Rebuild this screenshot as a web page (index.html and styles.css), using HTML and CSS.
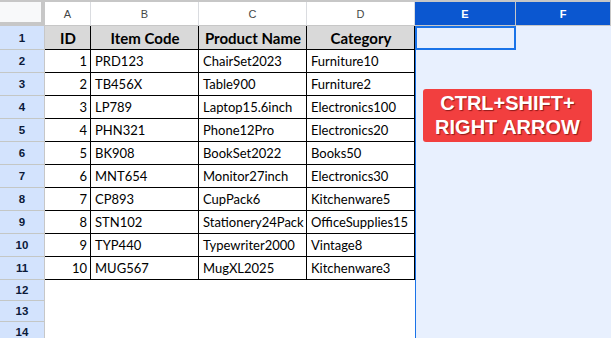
FILE: index.html
```html
<!DOCTYPE html>
<html>
<head>
    <title>Sheet</title>
    <link rel="stylesheet" href="styles.css">
</head>
<body>
    <div class="sheet">
        <div class="corner"></div>
        <div class="colhead">A</div>
        <div class="colhead">B</div>
        <div class="colhead">C</div>
        <div class="colhead">D</div>
        <div class="colhead picked">E</div>
        <div class="colhead picked">F</div>

        <div class="rowhead">1</div>
        <div class="cell th">ID</div>
        <div class="cell th">Item Code</div>
        <div class="cell th">Product Name</div>
        <div class="cell th">Category</div>
        <div class="range active"></div>
        <div class="range"></div>

        <div class="rowhead">2</div>
        <div class="cell num">1</div>
        <div class="cell">PRD123</div>
        <div class="cell">ChairSet2023</div>
        <div class="cell">Furniture10</div>
        <div class="range"></div>
        <div class="range"></div>

        <div class="rowhead">3</div>
        <div class="cell num">2</div>
        <div class="cell">TB456X</div>
        <div class="cell">Table900</div>
        <div class="cell">Furniture2</div>
        <div class="range"></div>
        <div class="range"></div>

        <div class="rowhead">4</div>
        <div class="cell num">3</div>
        <div class="cell">LP789</div>
        <div class="cell">Laptop15.6inch</div>
        <div class="cell">Electronics100</div>
        <div class="range"></div>
        <div class="range"></div>

        <div class="rowhead">5</div>
        <div class="cell num">4</div>
        <div class="cell">PHN321</div>
        <div class="cell">Phone12Pro</div>
        <div class="cell">Electronics20</div>
        <div class="range"></div>
        <div class="range"></div>

        <div class="rowhead">6</div>
        <div class="cell num">5</div>
        <div class="cell">BK908</div>
        <div class="cell">BookSet2022</div>
        <div class="cell">Books50</div>
        <div class="range"></div>
        <div class="range"></div>

        <div class="rowhead">7</div>
        <div class="cell num">6</div>
        <div class="cell">MNT654</div>
        <div class="cell">Monitor27inch</div>
        <div class="cell">Electronics30</div>
        <div class="range"></div>
        <div class="range"></div>

        <div class="rowhead">8</div>
        <div class="cell num">7</div>
        <div class="cell">CP893</div>
        <div class="cell">CupPack6</div>
        <div class="cell">Kitchenware5</div>
        <div class="range"></div>
        <div class="range"></div>

        <div class="rowhead">9</div>
        <div class="cell num">8</div>
        <div class="cell">STN102</div>
        <div class="cell">Stationery24Pack</div>
        <div class="cell">OfficeSupplies15</div>
        <div class="range"></div>
        <div class="range"></div>

        <div class="rowhead">10</div>
        <div class="cell num">9</div>
        <div class="cell">TYP440</div>
        <div class="cell">Typewriter2000</div>
        <div class="cell">Vintage8</div>
        <div class="range"></div>
        <div class="range"></div>

        <div class="rowhead">11</div>
        <div class="cell num">10</div>
        <div class="cell">MUG567</div>
        <div class="cell">MugXL2025</div>
        <div class="cell">Kitchenware3</div>
        <div class="range"></div>
        <div class="range"></div>

        <div class="rowhead">12</div>
        <div class="empty"></div>
        <div class="empty"></div>
        <div class="empty"></div>
        <div class="empty"></div>
        <div class="range"></div>
        <div class="range"></div>

        <div class="rowhead">13</div>
        <div class="empty"></div>
        <div class="empty"></div>
        <div class="empty"></div>
        <div class="empty"></div>
        <div class="range"></div>
        <div class="range"></div>

        <div class="rowhead">14</div>
        <div class="empty"></div>
        <div class="empty"></div>
        <div class="empty"></div>
        <div class="empty"></div>
        <div class="range"></div>
        <div class="range"></div>
    </div>

    <div class="shortcut">CTRL+SHIFT+<br>RIGHT ARROW</div>
</body>
</html>
```

FILE: styles.css
```css
* {
    box-sizing: border-box;
}
body {
    margin: 0;
    background: #fff;
    overflow: hidden;
    position: relative;
    width: 611px;
    height: 338px;
}
.sheet {
    display: grid;
    grid-template-columns: 45px 46px 108px 108px 108px 101px 95px;
    grid-template-rows: 24px 24px repeat(10, 23px) repeat(3, 21px);
    border-top: 2px solid #c7c7c7;
    font-family: Lato, "Liberation Sans", sans-serif;
}
.corner {
    background: #f8f9fa;
    border-right: 4px solid #c7c7c7;
    border-bottom: 4px solid #c7c7c7;
}
.colhead {
    display: flex;
    align-items: center;
    justify-content: center;
    font-family: "Liberation Sans", Arial, sans-serif;
    font-size: 11px;
    color: #444746;
    border-right: 1px solid #dadce0;
    border-bottom: 1px solid #c7c7c7;
}
.colhead.picked {
    background: #0b57d0;
    color: #fff;
    font-weight: bold;
    border-right-color: #c7c7c7;
}
.rowhead {
    display: flex;
    align-items: center;
    justify-content: center;
    background: #d3e3fd;
    font-family: "Liberation Sans", Arial, sans-serif;
    font-size: 11.5px;
    font-weight: bold;
    color: #0b1a3a;
    border-right: 1px solid #c7c7c7;
    border-bottom: 1px solid #c4c7c5;
}
.cell {
    display: flex;
    align-items: center;
    padding: 0 3px 0 4px;
    font-size: 13px;
    color: #000;
    white-space: nowrap;
    overflow: hidden;
    border-right: 1px solid #000;
    border-bottom: 1px solid #000;
}
.cell.th {
    justify-content: center;
    background: #d9d9d9;
    font-weight: bold;
    font-size: 15px;
}
.cell.num {
    justify-content: flex-end;
}
.range {
    background: #e8f0fe;
}
.range:nth-child(7n+6) {
    border-left: 1px solid #1a73e8;
}
.range.active {
    border: 2px solid #1a73e8;
}
.shortcut {
    position: absolute;
    left: 423px;
    top: 89px;
    width: 169px;
    height: 53px;
    padding-top: 2px;
    background: #f23f3f;
    border-radius: 3px;
    color: #fff;
    font-family: "Liberation Sans", Arial, sans-serif;
    font-weight: bold;
    font-size: 20px;
    line-height: 24px;
    text-align: center;
    text-shadow: 1px 1px 1px rgba(80, 0, 0, 0.6);
}
```
